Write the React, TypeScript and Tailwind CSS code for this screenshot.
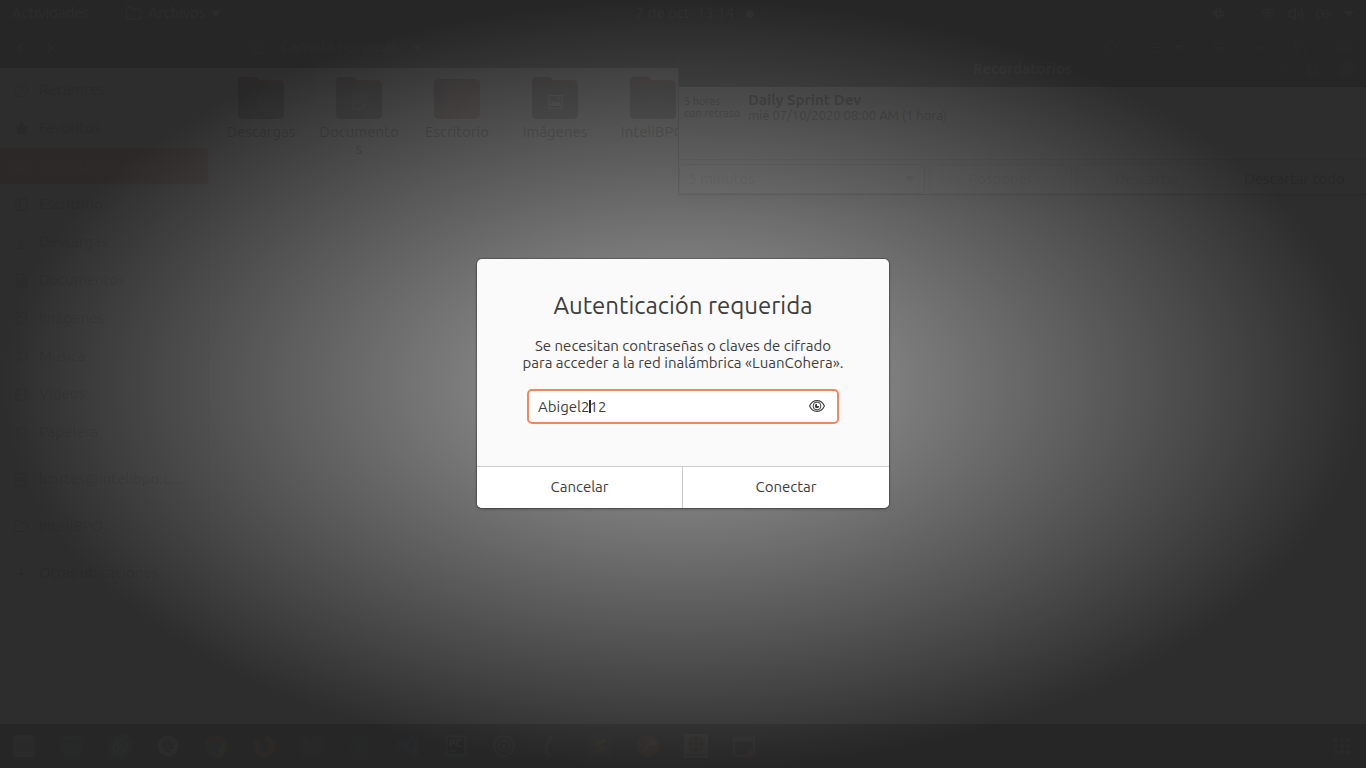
import React from "react";
import {
  Clock, Star, Home, PanelLeft, ArrowDownToLine, FileText, Image, Music, Film, Trash2,
  Server, Folder, Plus, ChevronLeft, ChevronRight, Search, List, Menu, Minus, Square, Copy, X,
  Wifi, Volume2, BatteryCharging,
} from "lucide-react";
import { FaSpotify, FaWhatsapp, FaSlack, FaChrome, FaFirefoxBrowser } from "react-icons/fa";

function Caret() {
  return (
    <svg width="10" height="6" viewBox="0 0 10 6" fill="currentColor" aria-hidden="true">
      <path d="M0 0h10L5 5z" />
    </svg>
  );
}

function TopBar() {
  return (
    <header className="grid h-[27px] grid-cols-3 items-center bg-[#262626] px-3 text-[15px] text-[#d0d0d0]">
      <div className="flex items-center gap-9">
        <button type="button">Actividades</button>
        <button type="button" className="flex items-center gap-1.5">
          <Folder size={17} strokeWidth={1.5} />
          Archivos
          <Caret />
        </button>
      </div>
      <button type="button" className="flex items-center gap-3 justify-self-center pl-6">
        <span className="whitespace-pre">7 de oct  13:14</span>
        <span className="size-2 rounded-full bg-[#d0d0d0]" />
      </button>
      <div className="flex items-center gap-3 justify-self-end">
        <FaSlack size={13} className="mr-6" />
        <Wifi size={15} />
        <Volume2 size={16} />
        <BatteryCharging size={16} />
        <Caret />
      </div>
    </header>
  );
}

function FilesHeader() {
  return (
    <div className="flex h-[41px] items-center bg-[#2b2b2b] px-3 text-[15px] text-[#8c8c8c]">
      <button type="button" aria-label="Atrás" className="mr-3.5"><ChevronLeft size={16} /></button>
      <button type="button" aria-label="Adelante"><ChevronRight size={16} /></button>
      <button type="button" className="ml-48 flex items-center gap-4 border-r border-[#202020] pr-3">
        <Home size={15} strokeWidth={1.5} />
        <span>Carpeta personal</span>
        <Caret />
      </button>
      <div className="ml-auto flex items-center gap-7">
        <button type="button" aria-label="Buscar"><Search size={15} strokeWidth={1.5} /></button>
        <button type="button" aria-label="Vista de lista" className="flex items-center gap-3">
          <List size={15} strokeWidth={1.5} />
          <Caret />
        </button>
        <button type="button" aria-label="Menú"><Menu size={14} strokeWidth={1.5} /></button>
        <button type="button" aria-label="Minimizar"><Minus size={12} /></button>
        <button type="button" aria-label="Restaurar"><Copy size={12} /></button>
        <button type="button" aria-label="Cerrar" className="rounded-full bg-[#3c3c3c] p-1"><X size={12} /></button>
      </div>
    </div>
  );
}

const places = [
  { name: "Recientes", Icon: Clock },
  { name: "Favoritos", Icon: Star, fill: true },
  { name: "Carpeta personal", Icon: Home, active: true },
  { name: "Escritorio", Icon: PanelLeft },
  { name: "Descargas", Icon: ArrowDownToLine },
  { name: "Documentos", Icon: FileText },
  { name: "Imágenes", Icon: Image },
  { name: "Música", Icon: Music },
  { name: "Vídeos", Icon: Film },
  { name: "Papelera", Icon: Trash2 },
  { name: "lcortes@intelibpo.c…", Icon: Server, divided: true },
  { name: "InteliBPO", Icon: Folder, divided: true },
  { name: "Otras ubicaciones", Icon: Plus, divided: true },
];

function Sidebar() {
  return (
    <nav className="flex w-[209px] shrink-0 flex-col border-r border-[#dcdcdc] bg-[#f4f4f4] pt-[3px] text-[15px] text-[#7c7c7c]">
      {places.map(({ name, Icon, active, divided, fill }) => (
        <React.Fragment key={name}>
          {divided && <div className="my-1 h-px bg-[#e6e6e6]" />}
          <a
            href="#"
            className={
              active
                ? "my-px flex h-9 items-center gap-2.5 bg-[#d26a48] pl-3.5 text-[#e0c0b0]"
                : "my-px flex h-9 items-center gap-2.5 pl-3.5"
            }
          >
            <Icon size={15} strokeWidth={1.5} fill={fill ? "currentColor" : "none"} />
            {name}
          </a>
        </React.Fragment>
      ))}
    </nav>
  );
}

function FolderArt({ kind }: { kind: string }) {
  if (kind === "desk") {
    return (
      <svg width="46" height="42" viewBox="0 0 46 42" aria-hidden="true">
        <defs>
          <linearGradient id="desk" x1="0" y1="0" x2="1" y2="1">
            <stop offset="0" stopColor="#8f5060" />
            <stop offset="1" stopColor="#bf6a58" />
          </linearGradient>
        </defs>
        <rect y="2" width="46" height="40" rx="5" fill="url(#desk)" />
        <path d="M5 2h5v40H5a5 5 0 0 1-5-5V7a5 5 0 0 1 5-5z" fill="#54323c" opacity=".5" />
      </svg>
    );
  }
  return (
    <svg width="46" height="42" viewBox="0 0 46 42" aria-hidden="true">
      <defs>
        <linearGradient id="back" x1="0" x2="1">
          <stop offset="0" stopColor="#6b2f40" />
          <stop offset="1" stopColor="#c9502f" />
        </linearGradient>
      </defs>
      <path d="M4 0h13q2 0 3 2l1 1h20q5 0 5 5v10H0V4q0-4 4-4z" fill="url(#back)" />
      <path d="M0 11q0-2 2-2h14q2 0 3-1l1-1h24q2 0 2 2v28q0 5-5 5H5q-5 0-5-5z" fill="#505050" />
      {kind === "down" && <path d="M22 17h5v8h3l-5.500 7-5.500-7h3zM18 34h13" fill="none" stroke="#a0a0a0" />}
      {kind === "doc" && <path d="M17 17h13v11l-4 4h-9zM19 20h9M19 23h9M19 26h6M26 32v-4h4" fill="none" stroke="#c8c8c8" />}
      {kind === "image" && (
        <>
          <path d="M17 18.500h13v13H17z" fill="none" stroke="#e0e0e0" strokeWidth="1.200" />
          <path d="M18.500 29v-2l3-4 2.500 3 2-2 2.500 3v2z" fill="#e0e0e0" />
          <circle cx="27" cy="21.500" r="1.200" fill="#e0e0e0" />
        </>
      )}
    </svg>
  );
}

const folders = [
  { name: "Descargas", kind: "down" },
  { name: "Documentos", kind: "doc" },
  { name: "Escritorio", kind: "desk" },
  { name: "Imágenes", kind: "image" },
  { name: "InteliBPO", kind: "plain" },
];

function FolderGrid() {
  return (
    <main className="flex grow items-start bg-[#fafafa] pl-[3px] pt-[9px] text-[15px] leading-[17px] text-[#303030]">
      {folders.map((f) => (
        <a key={f.name} href="#" className="flex w-[98px] flex-col items-center gap-1 px-2">
          <FolderArt kind={f.kind} />
          <span className="w-20 text-center break-all">{f.name}</span>
        </a>
      ))}
    </main>
  );
}

function Reminders() {
  return (
    <section className="absolute top-[52px] right-0 left-[678px] border-b border-l border-[#707070] bg-[#f8f8f8] text-[#101010] shadow-lg">
      <div className="grid h-[35px] grid-cols-[1fr_auto_1fr] items-center bg-[#2b2b2b] px-2.5 text-[15px] text-[#b0b0b0]">
        <h2 className="col-start-2 font-bold">Recordatorios</h2>
        <div className="flex items-center gap-5 justify-self-end">
          <button type="button" aria-label="Minimizar"><Minus size={12} /></button>
          <button type="button" aria-label="Maximizar"><Square size={10} /></button>
          <button type="button" aria-label="Cerrar" className="rounded-full bg-[#484848] p-1"><X size={11} /></button>
        </div>
      </div>
      <div className="flex h-[73px] gap-2 border-b border-[#b8b8b8] px-[5px] pt-1">
        <p className="pt-1 text-[11px] leading-3">5 horas<br />con retraso</p>
        <div>
          <h3 className="text-[15px] leading-[17px] font-bold text-black">Daily Sprint Dev</h3>
          <p className="text-[13px] leading-[15px]">mié 07/10/2020 08:00 AM (1 hora)</p>
        </div>
      </div>
      <div className="mt-1 grid grid-cols-[246px_1fr_1fr_1fr] gap-x-1 text-[15px] text-[#b4b4b4]">
        <div className="relative">
          <select aria-label="Posponer durante" className="h-[30px] w-full appearance-none rounded-sm border border-[#b0b0b0] bg-transparent px-2">
            <option>5 minutos</option>
          </select>
          <span className="pointer-events-none absolute top-3 right-2.5"><Caret /></span>
        </div>
        <button type="button" className="h-[30px] rounded-sm border border-[#c8c8c8]">Posponer</button>
        <button type="button" className="h-[30px] rounded-sm border border-[#c8c8c8]">Descartar</button>
        <button type="button" className="h-[30px] rounded-sm text-[#505050]">Descartar todo</button>
      </div>
    </section>
  );
}

const apps: { name: string; art: React.ReactNode; dots: number }[] = [
  { name: "Archivos", dots: 3, art: <><rect x="1" y="1" width="22" height="22" rx="1" fill="#aaa" /><path d="M4 6h6l2 2h8v10H4z" fill="#777" /></> },
  { name: "Spotify", dots: 0, art: <FaSpotify size={24} color="#1d8945" /> },
  { name: "WhatsApp", dots: 0, art: <><path d="M12 0a12 12 0 1 1-6 22l-6 2 2-6A12 12 0 0 1 12 0z" fill="#187d3d" /><FaWhatsapp x={4} y={4} size={16} color="#bbb" /></> },
  { name: "Slack", dots: 1, art: <><circle cx="12" cy="12" r="10.500" fill="#ccc" /><FaSlack x={5} y={5} size={14} color="#44374a" /></> },
  { name: "Chrome", dots: 2, art: <><circle cx="12" cy="12" r="11" fill="#2d7f4a" /><path d="M2 6a12 12 0 0 1 21 3H12z" fill="#a83a2b" /><path d="M23 9a12 12 0 0 1-11 15l4-10z" fill="#b79c35" /><FaChrome size={24} color="#fff2" /><circle cx="12" cy="12" r="4.500" fill="#2a5da0" /></> },
  { name: "Firefox", dots: 0, art: <><FaFirefoxBrowser size={24} color="#b65a20" /><circle cx="11" cy="13" r="4" fill="#4a3468" /></> },
  { name: "Terminal", dots: 1, art: <><rect y="2" width="24" height="20" rx="3" fill="#484848" /><path d="m4 6 3 2-3 2M9 10h4" fill="none" stroke="#ccc" /></> },
  { name: "GitKraken", dots: 0, art: <><circle cx="12" cy="12" r="10.500" fill="none" stroke="#196060" strokeWidth="1.500" /><path d="M6 11a6 6 0 0 1 12 0q0 3-4 4v4h-1v-5h-2v5h-1v-4q-4-1-4-4z" fill="#196060" /></> },
  { name: "Visual Studio Code", dots: 0, art: <path d="m17 1 6 3v16l-6 3-10-9-5 4-2-2 5-4-5-4 2-2 5 4zM17 7l-6 5 6 5z" fill="#1662ac" fillRule="evenodd" /> },
  { name: "PyCharm", dots: 0, art: <><path d="M1 1h22v22H1z" fill="#4d8566" /><path d="M4 4h16v16H4z" fill="#111" /><text x="5" y="13" fontSize="10" fontWeight="bold" fill="#ddd">PC</text><path d="M6 17h6" stroke="#ddd" /></> },
  { name: "Configuración", dots: 0, art: <><circle cx="12" cy="12" r="10" fill="none" stroke="#999" strokeWidth="2" /><circle cx="12" cy="12" r="5.500" fill="none" stroke="#888" strokeWidth="2" /><circle cx="12" cy="12" r="2" fill="#888" /></> },
  { name: "Evolución", dots: 0, art: <><path d="M14 1q-5-1-7 6l-3 6q0 8 6 10-4-6 0-15z" fill="#777" /><path d="M14 1q3 2 1 5M10 22q4 2 6-1" fill="none" stroke="#777" /></> },
  { name: "Sublime Text", dots: 1, art: <><rect width="24" height="24" rx="2" fill="#484848" /><path d="m6 8 12-4v4l-7 3 7 2v4L6 21v-4l7-2-7-3z" fill="#c28b30" /></> },
  { name: "Postman", dots: 1, art: <><circle cx="12" cy="12" r="11" fill="#b85b29" /><path d="m7 18 7-8" stroke="#ccc" strokeWidth="2" /><path d="m13 8 3-3 4 4-3 3z" fill="#ccc" /></> },
  { name: "Genexus", dots: 1, art: <><path d="M0 0h24v24H0z" fill="#bbb" /><circle cx="12" cy="10" r="9" fill="#7f2525" /><path d="M4 7h16M4 13h16M9 2v16M15 2v16" stroke="#bbb" /><path d="M2 21h20" stroke="#333" strokeWidth="2" strokeDasharray="3 1" /></> },
  { name: "Recordatorios", dots: 1, art: <><rect x="2" y="4" width="20" height="18" rx="3" fill="none" stroke="#999" strokeWidth="2" /><path d="M1 3h22v4H1zM6 0v4M17 0v4" fill="#999" stroke="#999" /><path d="m18 13 6 11H12z" fill="#9a3929" /><path d="M18 17v3" stroke="#eee" /></> },
];

function Dock() {
  return (
    <footer className="flex h-11 items-center bg-[#262626]">
      {apps.map((app) => (
        <button key={app.name} type="button" aria-label={app.name} className="flex w-12 flex-col items-center gap-1 pt-2">
          <svg width="24" height="24" viewBox="0 0 24 24" aria-hidden="true">{app.art}</svg>
          <span className="flex h-1 gap-0.5">
            {Array.from({ length: app.dots }, (_, i) => <i key={i} className="size-1 rounded-full bg-[#80351f]" />)}
          </span>
        </button>
      ))}
      <button type="button" aria-label="Mostrar aplicaciones" className="mr-4 ml-auto grid grid-cols-3 gap-0.5">
        {Array.from({ length: 9 }, (_, i) => <span key={i} className="size-1 rounded-full bg-[#909090]" />)}
      </button>
    </footer>
  );
}

function AuthDialog() {
  return (
    <form
      role="dialog"
      aria-labelledby="auth-title"
      onSubmit={(e) => e.preventDefault()}
      className="w-[412px] overflow-hidden rounded-[5px] bg-[#fafafa] text-[15px] text-[#3d3d3d] shadow-[0_0_0_1px_#00000030,0_1px_3px_#00000050]"
    >
      <div className="px-5 pt-[29px] pb-[42px]">
        <h1 id="auth-title" className="text-center text-[24px] leading-9">Autenticación requerida</h1>
        <p className="mt-[13px] text-center leading-[17px]">
          Se necesitan contraseñas o claves de cifrado<br />para acceder a la red inalámbrica «LuanCohera».
        </p>
        <div className="relative mx-auto mt-[18px] w-[312px]">
          <input
            aria-label="Contraseña"
            defaultValue="Abigel212"
            className="block h-[35px] w-full rounded-[5px] border-2 border-[#f08763] bg-white pr-9 pl-[9px] outline-none"
          />
          <span className="absolute top-[11px] left-[62px] h-[13px] w-0.5 bg-[#2d2d2d]" />
          <button type="button" aria-label="Mostrar la contraseña" className="absolute top-[9px] right-[14px]">
            <svg width="16" height="16" viewBox="0 0 16 16" fill="none" stroke="#3d3d3d" aria-hidden="true">
              <path d="M.6 8Q3 2.600 8 2.600T15.400 8Q13 13.400 8 13.400T.6 8z" strokeWidth="1.100" />
              <circle cx="8" cy="8" r="3.900" />
              <path d="M8 5.800A2.200 2.200 0 1 0 10.200 8H8z" fill="#3d3d3d" stroke="none" />
            </svg>
          </button>
        </div>
      </div>
      <div className="grid grid-cols-2 divide-x divide-[#cccccc] border-t border-[#cccccc] bg-white">
        <button type="button" className="h-[41px]">Cancelar</button>
        <button type="submit" className="h-[41px]">Conectar</button>
      </div>
    </form>
  );
}

export default function App() {
  return (
    <div className="relative flex min-h-screen flex-col overflow-hidden bg-[#262626] font-['Ubuntu','Noto_Sans',sans-serif]">
      <TopBar />
      <FilesHeader />
      <div className="flex grow">
        <Sidebar />
        <FolderGrid />
      </div>
      <Dock />
      <Reminders />
      <div className="absolute inset-0 bg-[#959595]/89" />
      <div className="absolute inset-0 flex items-center justify-center bg-[radial-gradient(closest-side,rgba(0,0,0,0),rgba(0,0,0,0.72))] pb-px">
        <AuthDialog />
      </div>
    </div>
  );
}
